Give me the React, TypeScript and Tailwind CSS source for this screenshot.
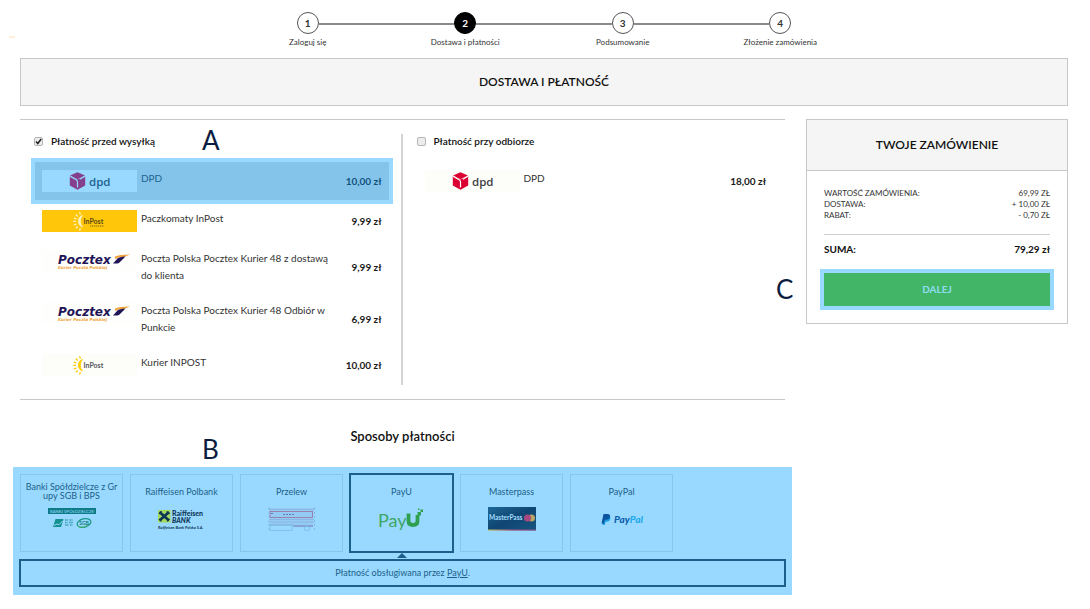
import type { ReactNode } from "react";
import clsx from "clsx";

const steps = ["Zaloguj się", "Dostawa i płatności", "Podsumowanie", "Złożenie zamówienia"];
const currentStep = 2;

function DpdLogo({ muted }: { muted?: boolean }) {
  const cube = muted ? "#84408a" : "#dc0032";
  const seam = muted ? "#99d9ff" : "#ffffff";
  return (
    <svg viewBox="0 0 95 22" className="h-[22px] w-[95px]">
      <path d="M35.5 2.2 43 5.6 35.5 9.2 28 5.6Z" fill={cube} />
      <path d="M27.8 6v9.4l7.7 4.4 7.7-4.4V6l-7.7 3.6Z" fill={cube} />
      <path d="M28 6.2l6.2 3.5q1.3.8 1.3 2.2v5.6M43 6.2l-5.2 3" fill="none" stroke={seam} strokeWidth="1.2" />
      <text x="47" y="15.5" fontSize="11.5" fontWeight="600" fontFamily="Open Sans, sans-serif" fill={muted ? "#1c6391" : "#414042"}>
        dpd
      </text>
    </svg>
  );
}

function InPostLogo({ yellow }: { yellow?: boolean }) {
  const sun = yellow ? "#fff3c0" : "#ffcb05";
  return (
    <svg viewBox="0 0 95 22" className={clsx("h-[22px] w-[95px]", yellow ? "bg-[#ffc60a]" : "bg-[#fdfefa]")}>
      <path d="M40.5 5.5a6 6 0 0 0 0 11.4 8.4 8.4 0 0 1 0-11.4Z" fill={sun} stroke={sun} strokeWidth="0.8" />
      <path
        d="M37.5 2.2l1 2.3M33.8 4.6l2 1.8M31.8 8l2.6.9M31.2 11.4h2.7M31.8 15l2.6-.9M33.8 18.2l2-1.8M37.5 20.6l1-2.3"
        stroke={sun}
        strokeWidth="1.3"
      />
      <text x="41.5" y="14" fontSize="7" fontWeight="700" fontFamily="Lato, sans-serif" fill={yellow ? "#5b4a12" : "#55565a"}>
        InPost
      </text>
      {yellow && <path d="M48 16h14" stroke="#8f7416" strokeWidth="1" strokeDasharray="1.5 .5" />}
    </svg>
  );
}

function PocztexLogo() {
  return (
    <svg viewBox="0 0 95 22" className="h-[22px] w-[95px] bg-[#fefefc]">
      <text x="16" y="13.5" fontSize="12" fontWeight="700" fontStyle="italic" fontFamily="DejaVu Sans, sans-serif" fill="#1f1456">
        Pocztex
      </text>
      <path d="M73 6.5Q77 4.3 88 4.4L80.5 7.4Q76 7 73 9Z" fill="#f0a33a" />
      <path d="M71 13.5 75.5 8.500Q77.500 6.700 83.500 6.400L77.500 12.600Q76.500 13.500 75 13.500Z" fill="#1f1456" />
      <text x="16" y="19" fontSize="4" fontWeight="700" fontStyle="italic" fontFamily="DejaVu Sans, sans-serif" fill="#f0a33a">
        Kurier Poczta Polskiej
      </text>
    </svg>
  );
}

function SgbLogo() {
  return (
    <svg viewBox="0 0 50 24" className="h-6 w-[50px]">
      <rect x="1" y="1" width="48" height="6" fill="#0e7c86" />
      <text x="25" y="5.6" textAnchor="middle" fontSize="4.3" fontFamily="Lato, sans-serif" fill="#99d9ff">
        BANKI SPÓŁDZIELCZE
      </text>
      <path d="M8.5 12h8l-2.5 8h-8Z" fill="#14918f" />
      <path d="M7 18.5l3-1.5 2 .8 3.5-3.8" fill="none" stroke="#99d9ff" strokeWidth="1" />
      <path d="M18 13h3M22.5 13h3M18 15.5h2.5M22 15.5h4M18 18h3.5M23 18h2.5" stroke="#3a9fb0" strokeWidth="1.6" strokeDasharray="1.6 .5" />
      <ellipse cx="37" cy="16" rx="7" ry="4.2" fill="none" stroke="#17958a" strokeWidth="1.2" transform="rotate(-14 37 16)" />
      <path d="M31 19.5q7 2.5 12-4" fill="none" stroke="#55b86b" strokeWidth="1" />
      <text x="37" y="17.6" textAnchor="middle" fontSize="5" fontWeight="700" fontFamily="Lato, sans-serif" fill="#0e7c86">
        SGB
      </text>
    </svg>
  );
}

function RaiffeisenLogo() {
  return (
    <svg viewBox="0 0 50 24" className="h-6 w-[50px]">
      <rect x="1" y="3" width="12.5" height="12.5" fill="#a5da5c" />
      <path d="M2.5 5l9.5 8.5M12 5l-9.5 8.5" stroke="#0d3656" strokeWidth="2.6" />
      <path d="M2 7.2l2.8-2.8M12.5 7.2 9.7 4.4M4.5 14.3 2 11.8M10 14.3l2.5-2.5" stroke="#0d3656" strokeWidth="1.2" />
      <g fill="#0d3656" fontFamily="Lato, sans-serif" fontWeight="900">
        <text x="15" y="8.5" fontSize="7">Raiffeisen</text>
        <text x="15" y="16" fontSize="7" fontStyle="italic">BANK</text>
        <text x="1" y="22" fontSize="4" fontStyle="italic" fontWeight="700">Raiffeisen Bank Polska S.A.</text>
      </g>
    </svg>
  );
}

function TransferLogo() {
  return (
    <svg viewBox="0 0 50 24" className="h-6 w-[50px]" fill="none">
      <rect x="2.5" y="1" width="44" height="17" fill="#93cbf3" />
      <path d="M2 2.5h45M2 12.5h45M2 15h45M2 17.5h24" stroke="#86b2df" strokeWidth="0.8" />
      <rect x="3" y="4.5" width="42.5" height="6" stroke="#9a6f9f" strokeWidth="0.8" />
      <path d="M16 7.5h12M4 6.5h3" stroke="#6d74ac" strokeDasharray="2 1" />
      <rect x="3" y="18.5" width="22" height="5" stroke="#79bce8" strokeWidth="0.8" />
      <path d="M26 19h20" stroke="#7d8cc4" strokeWidth="1.4" />
      <circle cx="40" cy="21.5" r="2.5" stroke="#79bce8" />
      <path d="M1 1h2M46.5 1h2M2 1v22M47.5 1v22" stroke="#7fb2df" strokeWidth="0.8" strokeDasharray="2 2" />
    </svg>
  );
}

function PayULogo() {
  return (
    <svg viewBox="0 0 50 24" className="h-6 w-[50px]">
      <text x="1" y="19.5" fontSize="18" fontFamily="Lato, sans-serif" fill="#3fa667">
        Pay
      </text>
      <path d="M31.500 6.500v7.500q0 4 4.500 4t4.500-4V8" fill="none" stroke="#2fa04f" strokeWidth="3.800" />
      <path d="M40.500 5h3.500v3.500h-3.500ZM43.500 2.500h2.500V5h-2.500ZM41 1.500h1.500V3H41Z" fill="#2fa04f" />
    </svg>
  );
}

function MasterpassLogo() {
  return (
    <svg viewBox="0 0 50 24" className="h-6 w-[50px]">
      <defs>
        <linearGradient id="mp-bg" x1="0" y1="0" x2="1" y2="1">
          <stop offset="0" stopColor="#1f6896" />
          <stop offset="0.5" stopColor="#0f4673" />
          <stop offset="1" stopColor="#17547f" />
        </linearGradient>
        <linearGradient id="mp-line">
          <stop offset="0" stopColor="#b6c56c" />
          <stop offset="0.5" stopColor="#a5567e" />
          <stop offset="1" stopColor="#77528f" />
        </linearGradient>
      </defs>
      <rect x="1" width="48" height="23" fill="url(#mp-bg)" />
      <rect x="1" y="22.5" width="48" height="1.2" fill="url(#mp-line)" />
      <text x="2" y="13.3" fontSize="6.5" fontWeight="700" fontFamily="Lato, sans-serif" fill="#a5dfff">
        MasterPass
      </text>
      <circle cx="44.5" cy="11" r="3.5" fill="#b9a565" />
      <circle cx="40.5" cy="11" r="3.5" fill="#a8487f" />
    </svg>
  );
}

function PayPalLogo() {
  return (
    <svg viewBox="0 0 50 24" className="h-6 w-[50px]">
      <path d="M11.500 8.5q2.500.7 1.900 3.200-.7 3-3.900 3h-1l-.7 3.300H5.500L7 10Z" fill="#149fe0" />
      <path d="M6.500 7h4q3 .1 2.500 2.800-.6 3-3.900 3H7.700L7 16.500H4.500Z" fill="#0d559f" />
      <text x="17" y="16" fontSize="10" fontWeight="900" fontStyle="italic" fontFamily="Lato, sans-serif" fill="#0c5fae">
        Pay<tspan fill="#1fa9ec">Pal</tspan>
      </text>
    </svg>
  );
}

interface Delivery {
  name: string;
  price: string;
  logo: ReactNode;
  selected?: boolean;
}

const prepaid: Delivery[] = [
  { name: "DPD", price: "10,00 zł", logo: <DpdLogo muted />, selected: true },
  { name: "Paczkomaty InPost", price: "9,99 zł", logo: <InPostLogo yellow /> },
  { name: "Poczta Polska Pocztex Kurier 48 z dostawą do klienta", price: "9,99 zł", logo: <PocztexLogo /> },
  { name: "Poczta Polska Pocztex Kurier 48 Odbiór w Punkcie", price: "6,99 zł", logo: <PocztexLogo /> },
  { name: "Kurier INPOST", price: "10,00 zł", logo: <InPostLogo /> },
];

const onDelivery: Delivery[] = [{ name: "DPD", price: "18,00 zł", logo: <DpdLogo /> }];

const payments = [
  { name: "Banki Spółdzielcze z Grupy SGB i BPS", logo: <SgbLogo /> },
  { name: "Raiffeisen Polbank", logo: <RaiffeisenLogo /> },
  { name: "Przelew", logo: <TransferLogo /> },
  { name: "PayU", logo: <PayULogo />, selected: true },
  { name: "Masterpass", logo: <MasterpassLogo /> },
  { name: "PayPal", logo: <PayPalLogo /> },
];

const summary = [
  ["Wartość zamówienia:", "69,99 zł"],
  ["Dostawa:", "+ 10,00 zł"],
  ["Rabat:", "- 0,70 zł"],
];

function Marker({ children, className }: { children: string; className: string }) {
  return <span className={clsx("absolute text-[26px] leading-none text-[#0b1c3f]", className)}>{children}</span>;
}

function DeliveryGroup({ title, options, checked }: { title: string; options: Delivery[]; checked?: boolean }) {
  return (
    <div className="pr-2 pb-[9px] pl-[11px]">
      <label className="flex h-[14px] items-center gap-2 pl-[3px] text-[10px] font-semibold">
        <span className="relative flex">
          <input
            type="checkbox"
            defaultChecked={checked}
            className="peer size-[9px] appearance-none rounded-[2px] border border-[#b5b5b5] bg-[#ececec]"
          />
          <svg viewBox="0 0 9 9" className="pointer-events-none absolute inset-0 hidden size-[9px] peer-checked:block">
            <path d="M2 4.5l1.8 2L7.2 2" fill="none" stroke="#222" strokeWidth="1.5" />
          </svg>
        </span>
        {title}
      </label>
      <ul className="mt-[22px] flex flex-col gap-[18px]">
        {options.map((o) => (
          <li key={o.name}>
            <label
              className={clsx(
                "relative flex items-start gap-1 text-[10px] leading-[17px]",
                o.selected
                  ? "-my-3 border-4 border-[#99d9ff] bg-[#85c4ea] px-[7px] py-2 text-[#1c6391]"
                  : "px-[11px] text-[#333]"
              )}
            >
              <input type="radio" name={title} defaultChecked={o.selected} className="sr-only" />
              <span className={clsx("shrink-0", o.selected ? "bg-[#99d9ff]" : "bg-[#fdfefa]")}>{o.logo}</span>
              <span className="w-[190px]">{o.name}</span>
              <span className={clsx("ml-auto self-center font-bold whitespace-nowrap", o.selected ? "text-[#10527c]" : "text-[#1a1a1a]")}>
                {o.price}
              </span>
            </label>
          </li>
        ))}
      </ul>
    </div>
  );
}

export default function App() {
  return (
    <div className="relative min-h-screen bg-white pt-3 pr-[22px] pb-[14px] pl-5 font-['Lato',sans-serif] text-[#111]">
      <span className="absolute top-9 left-[9px] h-[2px] w-[6px] bg-[#fdeeda]" />

      <ol className="mx-auto grid w-[630px] grid-cols-4">
        {steps.map((step, i) => (
          <li key={step} className="relative flex flex-col items-center">
            {i > 0 && (
              <span className="absolute top-[11px] right-[calc(50%+11px)] h-[2px] w-[calc(100%-22px)] bg-[#8a8a8a]" />
            )}
            <span
              className={clsx(
                "flex size-[22px] items-center justify-center rounded-full border text-[10px] font-bold",
                i + 1 === currentStep ? "border-black bg-black text-white" : "border-[#555] bg-white text-[#333]"
              )}
            >
              {i + 1}
            </span>
            <span className="mt-[3px] text-[8px] leading-[10px] text-[#333]">{step}</span>
          </li>
        ))}
      </ol>

      <h1 className="mt-[11px] border border-[#c8c8c8] bg-[#f5f5f5] text-center text-[12px] leading-[46px] font-semibold">
        DOSTAWA I PŁATNOŚĆ
      </h1>

      <div className="mt-[13px] flex items-start gap-[21px]">
        <main className="min-w-0 flex-1">
          <section className="relative border-y border-[#c8c8c8] py-[14px]">
            <Marker className="top-[7px] left-[182px]">A</Marker>
            <div className="grid grid-cols-2 divide-x-2 divide-[#d4d4d4]">
              <DeliveryGroup title="Płatność przed wysyłką" options={prepaid} checked />
              <DeliveryGroup title="Płatność przy odbiorze" options={onDelivery} />
            </div>
          </section>

          <section className="relative mt-7">
            <h2 className="text-center text-[13px] leading-4 font-semibold">Sposoby płatności</h2>
            <Marker className="top-2 left-[182px]">B</Marker>
            <div className="-mx-[7px] mt-[23px] bg-[#99d9ff] px-[6px] pt-[6px] pb-2 text-[9px] text-[#1c5f8a]">
              <div className="flex flex-wrap gap-[5px]">
                {payments.map((p) => (
                  <label
                    key={p.name}
                    className={clsx(
                      "relative flex h-20 w-[105px] flex-col items-center",
                      p.selected ? "border-2 border-[#1c5f8a]" : "border border-transparent"
                    )}
                  >
                    <input type="radio" name="payment" defaultChecked={p.selected} className="sr-only" />
                    <span
                      className={clsx(
                        "flex size-full flex-col items-center pt-1",
                        !p.selected && "border border-[#86c6eb]"
                      )}
                    >
                      <span className="flex h-6 items-center px-1 text-center leading-[9px] break-all">{p.name}</span>
                      <span className="mt-1">{p.logo}</span>
                    </span>
                    {p.selected && (
                      <svg viewBox="0 0 10 5" className="absolute top-full left-1/2 mt-[2px] h-[5px] w-[10px] -translate-x-1/2">
                        <path d="M0 5 5 0l5 5Z" fill="#1c5f8a" />
                      </svg>
                    )}
                  </label>
                ))}
              </div>
              <p className="mt-[6px] border-2 border-[#1c5f8a] text-center leading-6">
                Płatność obsługiwana przez{" "}
                <a href="#payu" className="underline">
                  PayU
                </a>
                .
              </p>
            </div>
          </section>
        </main>

        <aside className="w-[262px] shrink-0 border border-[#c8c8c8]">
          <h2 className="border-b border-[#c8c8c8] bg-[#f5f5f5] text-center text-[12px] leading-[50px] font-semibold">
            TWOJE ZAMÓWIENIE
          </h2>
          <div className="px-[17px] pt-[17px] pb-[13px]">
            <dl className="text-[8px] leading-[11px] text-[#333] uppercase">
              {summary.map(([label, value]) => (
                <div key={label} className="flex justify-between">
                  <dt>{label}</dt>
                  <dd>{value}</dd>
                </div>
              ))}
            </dl>
            <div className="mt-[13px] flex justify-between border-t border-[#d0d0d0] pt-[6px] text-[10px] leading-[17px] font-bold">
              <span>SUMA:</span>
              <span>79,29 zł</span>
            </div>
            <div className="relative -mx-1 mt-[11px]">
              <Marker className="top-[7px] -left-[44px]">C</Marker>
              <button
                type="button"
                className="block w-full border-4 border-[#99d9ff] bg-[#43b566] text-[10px] leading-[33px] font-bold text-[#8fdcf0]"
              >
                DALEJ
              </button>
            </div>
          </div>
        </aside>
      </div>
    </div>
  );
}
